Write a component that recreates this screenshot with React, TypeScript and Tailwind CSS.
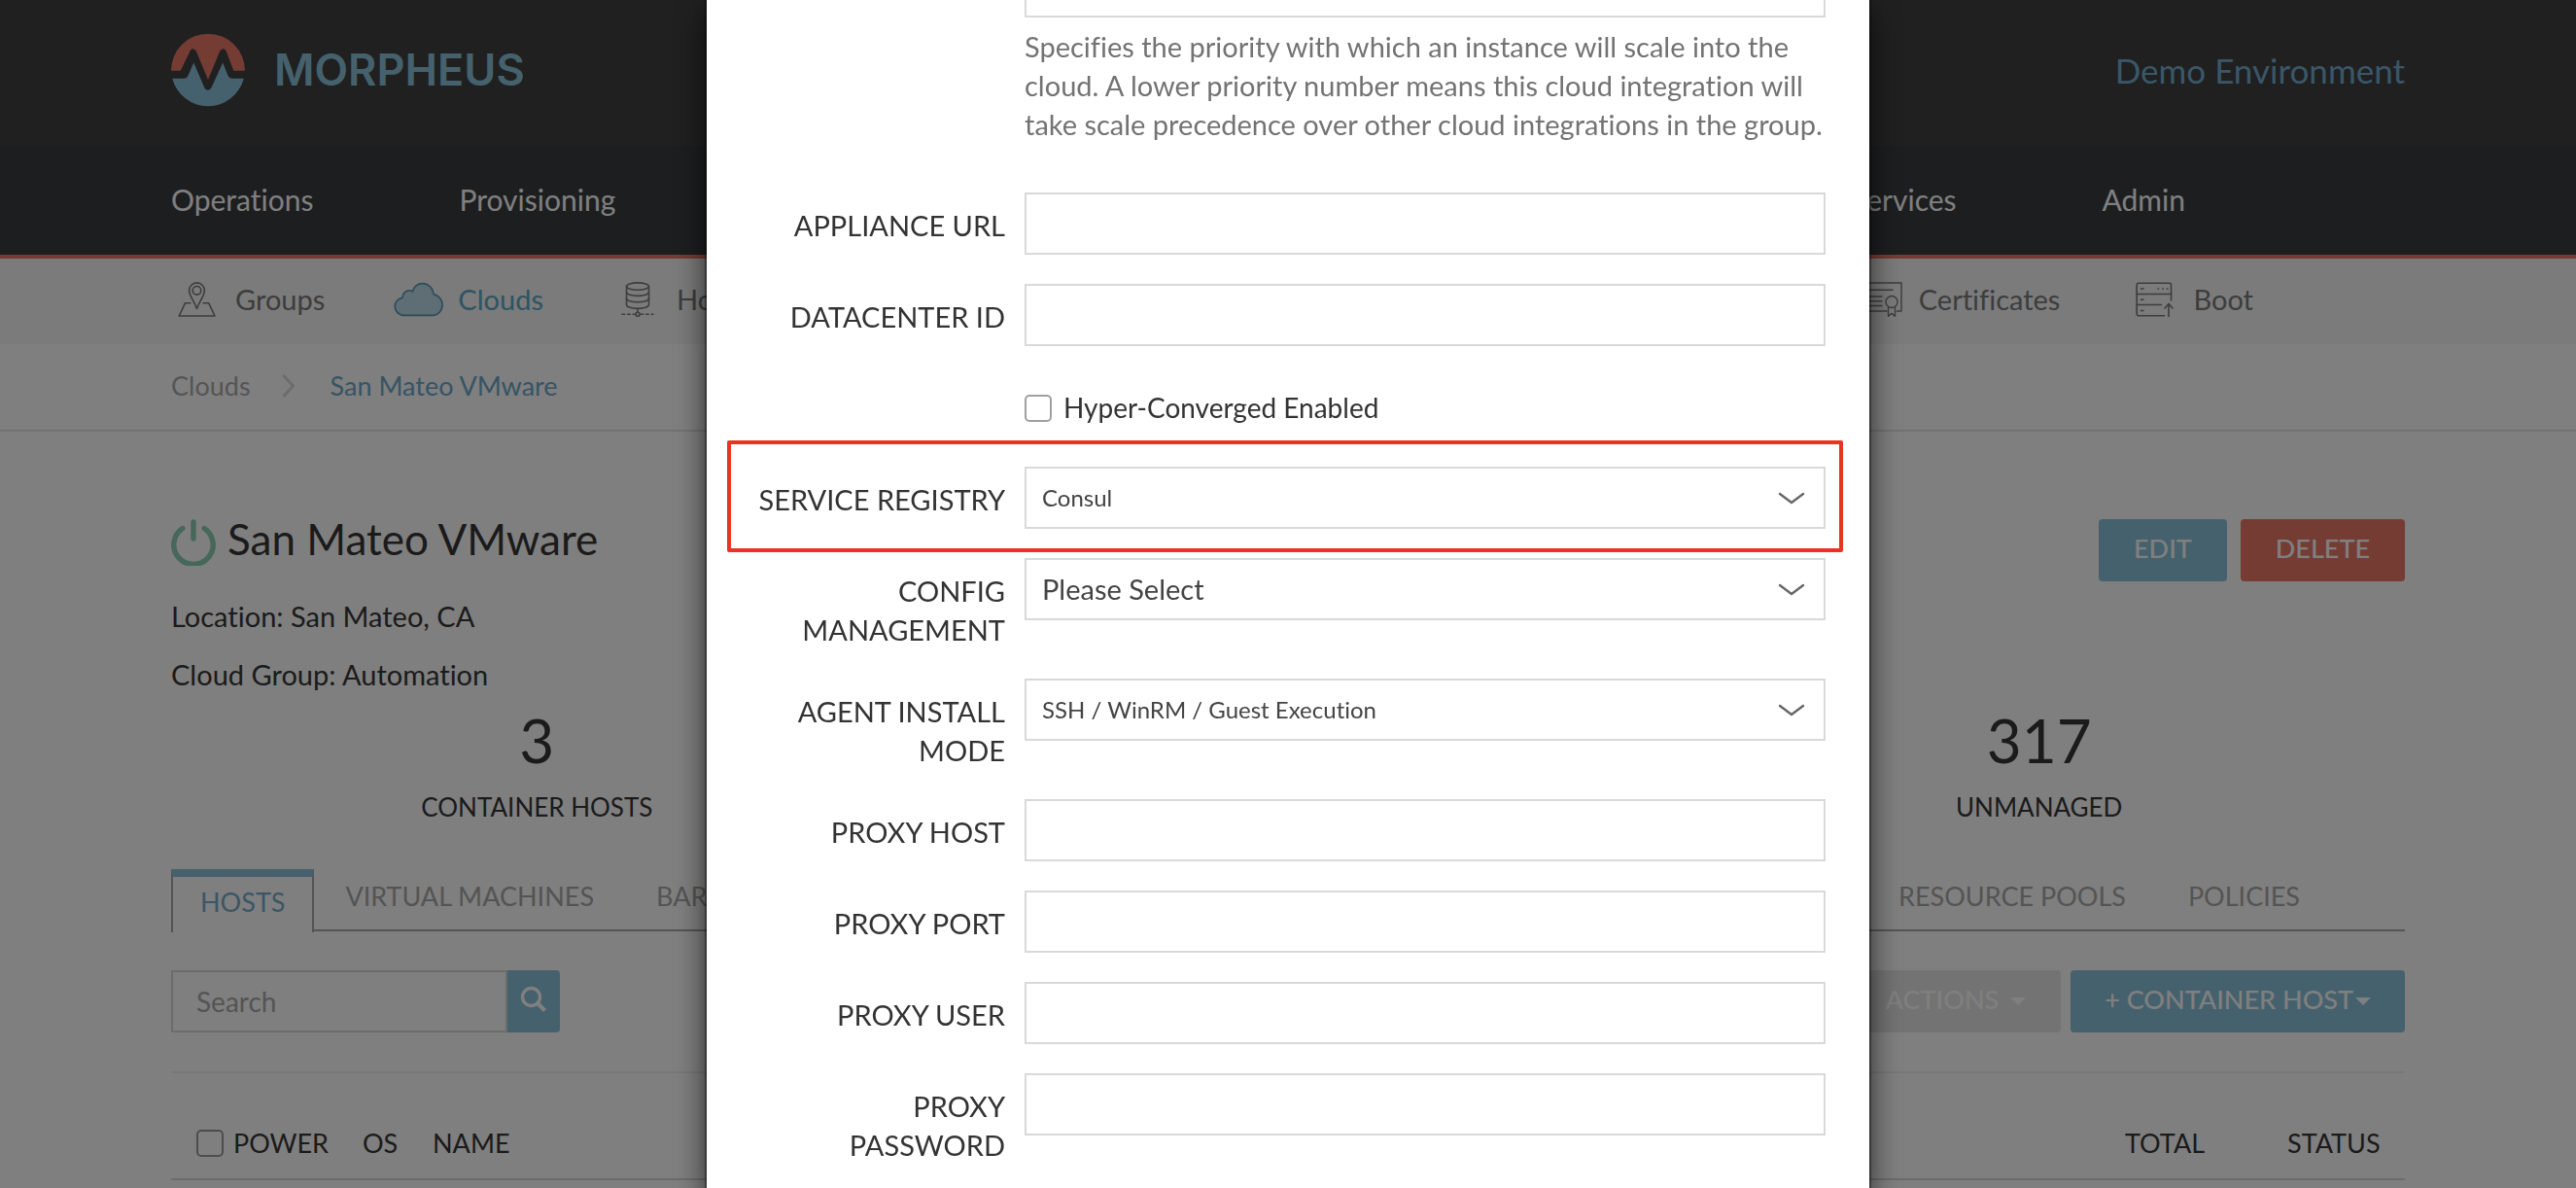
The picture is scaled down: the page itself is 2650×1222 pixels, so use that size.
import type { ReactNode } from "react";

function Container({ className = "", children }: { className?: string; children: ReactNode }) {
  return <div className={`mx-auto w-full max-w-[2298px] ${className}`}>{children}</div>;
}

function LogoMark() {
  return (
    <svg className="size-[76px]" viewBox="0 0 76 76" aria-hidden="true">
      <path
        fill="#ea7868"
        d="M0 38.7A38 38 0 0 1 76 38.7H64.4L57.4 20.5Q56 16.3 53.7 16.3Q51.2 16.3 49.6 20L38 48L26.4 20Q24.8 16.3 22.3 16.3Q20 16.3 18.6 20.5L9.7 38.7Z"
      />
      <path
        fill="#8bc3db"
        d="M1.2 46.7H13Q16.2 46.7 17.6 43.5L23.3 30.4L34 55.5Q35.5 58.8 38 58.8Q40.3 58.8 41.8 55.5L53.2 30.4L58.4 43.5Q59.8 46.7 63 46.7H74.8A38 38 0 0 1 1.2 46.7Z"
      />
    </svg>
  );
}

const lineIcon = {
  fill: "none",
  stroke: "currentColor",
  strokeWidth: 1.6,
  strokeLinecap: "round" as const,
  strokeLinejoin: "round" as const,
  "aria-hidden": true,
};

function GroupsIcon() {
  return (
    <svg className="h-9 w-[39px]" viewBox="0 0 39 36" {...lineIcon}>
      <path d="M19.5 27.5C17 20 11.6 14.5 11.6 8.8a7.9 7.9 0 0 1 15.8 0C27.4 14.5 22 20 19.5 27.5Z" />
      <circle cx="19.5" cy="8.8" r="4.3" />
      <path d="M12.8 21.8H7.4L1.2 35H38L31.8 21.8H26.2" />
    </svg>
  );
}

function CloudIcon() {
  return (
    <svg className="h-9 w-[52px] text-[#5796b4]" viewBox="0 0 52 36" {...lineIcon}>
      <path
        fill="#bedaea"
        d="M11 34.4C5.3 34.4 1.2 30 1.2 24.9C1.2 20.6 4.5 16.8 9 16.4C9 11.6 12.6 8.8 16.2 8.8Q18.2 8.8 19.6 9.9C20.4 5 24.5 1.6 29.6 1.6C35.5 1.6 40.6 6.3 41 12.6C46.4 13.8 50 18.2 50 23.6C50 29.6 45.6 34.4 40 34.4Z"
      />
    </svg>
  );
}

function HostsIcon() {
  return (
    <svg className="h-9 w-[34px]" viewBox="0 0 34 36" {...lineIcon}>
      <ellipse cx="17" cy="4.6" rx="11.5" ry="3.7" />
      <path d="M5.5 4.6V23.6C5.5 25.8 10.6 27.4 17 27.4S28.5 25.8 28.5 23.6V4.6" />
      <path d="M5.5 10.6C5.5 12.8 10.6 14.4 17 14.4S28.5 12.8 28.5 10.6" />
      <path d="M5.5 17C5.5 19.2 10.6 20.8 17 20.8S28.5 19.2 28.5 17" />
      <path d="M17 27.4V31" />
      <circle cx="17" cy="33.2" r="2" />
      <path d="M1 33.2H14M20 33.2H33" strokeDasharray="2.6 3" />
    </svg>
  );
}

function CertificateIcon() {
  return (
    <svg className="h-9 w-[46px]" viewBox="0 0 46 36" {...lineIcon} strokeWidth={1.4}>
      <path d="M30 30H1V1H45V30H40.5" />
      <path d="M10 8.3H36M8 15H25M8 19.7H25M8 24.5H25" />
      <circle cx="35" cy="20.5" r="6" />
      <path d="M31.5 26.5V35.2L35 32.4L38.5 35.2V26.5" />
    </svg>
  );
}

function BootIcon() {
  return (
    <svg className="h-9 w-[39px]" viewBox="0 0 39 36" {...lineIcon}>
      <path d="M36.5 19V3.2Q36.5 1.2 34.5 1.2H3.2Q1.2 1.2 1.2 3.2V32.7Q1.2 34.7 3.2 34.7H29.5" />
      <path d="M1.2 12.5H36.5M1.2 23.5H26.5" />
      <path d="M5.5 7H8M5.5 18.2H8M5.5 29.5H8M23 7H23.5M27.7 7H28.2M32.3 7H32.8" />
      <path d="M34 35.5V22.5M30 27L34 22.5L38 27" />
    </svg>
  );
}

function PowerIcon() {
  return (
    <svg className="h-12 w-[46px]" viewBox="0 0 46 48" fill="none" stroke="#8ccfb5" strokeWidth="5.4" strokeLinecap="round" aria-hidden="true">
      <path d="M23 3V20" />
      <path d="M11.8 9.5A20.2 20.2 0 1 0 34.2 9.5" />
    </svg>
  );
}

function SearchIcon() {
  return (
    <svg className="size-7" viewBox="0 0 28 28" fill="none" stroke="#fff" aria-hidden="true">
      <circle cx="11.5" cy="11.5" r="9" strokeWidth="3.4" />
      <path d="M18 18L25.5 25.5" strokeWidth="4.2" />
    </svg>
  );
}

function Caret() {
  return (
    <svg className="mt-1 h-2 w-4" viewBox="0 0 16 8" fill="currentColor" aria-hidden="true">
      <path d="M0 0H16L8 8Z" />
    </svg>
  );
}

function SubnavLink({ icon, label, active = false }: { icon: ReactNode; label: string; active?: boolean }) {
  return (
    <a
      href="#"
      className={`flex items-center gap-3.5 text-[29px] leading-10 ${active ? "text-[#5ea8c6]" : "text-[#7a7a7a]"}`}
    >
      <span className="flex w-[52px] justify-center">{icon}</span>
      {label}
    </a>
  );
}

function Stat({ value, label, className }: { value: string; label: string; className: string }) {
  return (
    <div className={`text-center text-[#363636] ${className}`}>
      <div className="text-[62px] leading-[62px]">{value}</div>
      <div className="mt-[22px] text-[26px] leading-8">{label}</div>
    </div>
  );
}

function TopBars() {
  return (
    <>
      <header className="bg-[#404040]">
        <Container className="flex h-[150px] items-center justify-between pb-1.5">
          <a href="#" className="flex items-center gap-[30px]">
            <LogoMark />
            <span className="font-[Inter,sans-serif] text-[45px] leading-[60px] font-semibold text-[#8bc3db]">
              MORPHEUS
            </span>
          </a>
          <a href="#" className="text-[35px] leading-[50px] text-[#74aed0]">Demo Environment</a>
        </Container>
      </header>
      <nav className="border-b-4 border-[#ea7868] bg-[#3a3c40]" aria-label="Main">
        <Container className="flex h-28 items-center justify-between pb-[3px] text-[30px] leading-10 text-white">
          <div className="flex gap-[150px]">
            <a href="#">Operations</a>
            <a href="#">Provisioning</a>
          </div>
          <div className="flex gap-[150px] pr-[226px]">
            <a href="#">Services</a>
            <a href="#">Admin</a>
          </div>
        </Container>
      </nav>
      <nav className="bg-[#f6f6f6]" aria-label="Infrastructure">
        <Container className="flex h-[88px] items-center justify-between pb-1">
          <div className="flex gap-[71px]">
            <SubnavLink icon={<GroupsIcon />} label="Groups" />
            <SubnavLink icon={<CloudIcon />} label="Clouds" active />
            <SubnavLink icon={<HostsIcon />} label="Hosts" />
          </div>
          <div className="flex gap-[71px] pr-[156px]">
            <SubnavLink icon={<CertificateIcon />} label="Certificates" />
            <SubnavLink icon={<BootIcon />} label="Boot" />
          </div>
        </Container>
      </nav>
      <nav className="border-b-2 border-[#e4e4e4]" aria-label="Breadcrumb">
        <Container className="flex h-[88px] items-center pb-0.5 text-[27px] leading-10">
          <a href="#" className="text-[#aaaaaa]">Clouds</a>
          <svg className="mr-9 ml-8 h-6 w-3.5" viewBox="0 0 14 24" fill="none" stroke="#d9d9d9" strokeWidth="3" aria-hidden="true">
            <path d="M1.5 1L11.5 12L1.5 23" />
          </svg>
          <a href="#" className="text-[#6ca8ca]">San Mateo VMware</a>
        </Container>
      </nav>
    </>
  );
}

const tabClass = "px-8 pb-1.5 leading-[56px]";

function CloudPage() {
  return (
    <main>
      <Container className="pt-[90px]">
        <div className="flex items-start justify-between">
          <div className="text-[29px] leading-10 text-[#363636]">
            <h1 className="mb-8 flex items-start gap-3 text-[44px]">
              <PowerIcon />
              San Mateo VMware
            </h1>
            <p className="mb-5">Location: San Mateo, CA</p>
            <p>Cloud Group: Automation</p>
          </div>
          <div className="flex gap-3.5 text-[27px] font-medium text-white">
            <button type="button" className="h-16 rounded bg-[#8bc3db] px-9 pb-1">EDIT</button>
            <button type="button" className="h-16 rounded bg-[#ea7868] px-9 pb-1">DELETE</button>
          </div>
        </div>

        <div className="mt-4 -mx-2.5 grid grid-cols-3">
          <Stat value="3" label="CONTAINER HOSTS" className="col-start-1" />
          <Stat value="317" label="UNMANAGED" className="col-start-3" />
        </div>

        <div role="tablist" className="mt-12 flex h-16 items-stretch border-b-2 border-[#aaaaaa] text-[27px] text-[#a9a9a9]">
          <button type="button" role="tab" aria-selected="true" className="-mb-[3px] border-x-2 border-t-8 border-x-[#a9a9a9] border-t-[#8bc3db] bg-white px-7 pb-1 text-[#76accc]">
            HOSTS
          </button>
          <button type="button" role="tab" className={tabClass}>VIRTUAL MACHINES</button>
          <button type="button" role="tab" className={tabClass}>BARE METAL</button>
          <button type="button" role="tab" className={`ml-auto ${tabClass}`}>RESOURCE POOLS</button>
          <button type="button" role="tab" className={`mr-[76px] ${tabClass}`}>POLICIES</button>
        </div>

        <div className="my-10 flex items-center justify-between">
          <form className="flex h-16">
            <input
              type="search"
              aria-label="Search hosts"
              placeholder="Search"
              className="w-[346px] border-2 border-[#d9d9d9] px-6 text-[28px] placeholder:text-[#a9a9a9]"
            />
            <button type="button" aria-label="Search" className="flex w-[54px] items-center justify-center rounded-r bg-[#8bc3db] pb-1">
              <SearchIcon />
            </button>
          </form>
          <div className="flex gap-2.5 text-[27px] font-medium text-white">
            <button type="button" disabled className="flex h-16 items-center gap-3 rounded bg-[#e6e6e6] px-9 pb-1">
              ACTIONS
              <Caret />
            </button>
            <button type="button" className="flex h-16 items-center gap-0.5 rounded bg-[#8bc3db] px-[35px] pb-1">
              + CONTAINER HOST
              <Caret />
            </button>
          </div>
        </div>

        <table className="w-full table-fixed border-y-2 border-t-[#efefef] border-b-[#d9d9d9] text-left text-[27px] text-[#363636]">
          <thead>
            <tr className="h-[110px]">
              <th className="w-16 pt-9 pl-[26px]">
                <input
                  type="checkbox"
                  aria-label="Select all hosts"
                  className="block size-7 appearance-none rounded-[5px] border-2 border-[#9a9a9a]"
                />
              </th>
              <th className="w-[133px] pt-9 font-normal">POWER</th>
              <th className="w-[72px] pt-9 font-normal">OS</th>
              <th className="pt-9 font-normal">NAME</th>
              <th className="w-[167px] pt-9 font-normal">TOTAL</th>
              <th className="w-[121px] pt-9 font-normal">STATUS</th>
            </tr>
          </thead>
        </table>
      </Container>
    </main>
  );
}

function Row({ id, label, highlighted = false, children }: { id: string; label?: string; highlighted?: boolean; children: ReactNode }) {
  return (
    <div className="relative mb-[30px] grid grid-cols-[262px_1fr] gap-5">
      {label ? (
        <label htmlFor={id} className="pt-3.5 text-right whitespace-pre-line">{label}</label>
      ) : (
        <span />
      )}
      <div>{children}</div>
      {highlighted && (
        <div className="pointer-events-none absolute -top-[27px] -right-[18px] -bottom-6 -left-6 rounded-xs border-4 border-[#e93323]" />
      )}
    </div>
  );
}

function TextRow({ id, label, type = "text" }: { id: string; label: string; type?: string }) {
  return (
    <Row id={id} label={label}>
      <input id={id} type={type} className="block h-16 w-full border-2 border-[#d9d9d9] bg-white px-4" />
    </Row>
  );
}

function SelectRow({ id, label, value, small = false, highlighted = false }: { id: string; label: string; value: string; small?: boolean; highlighted?: boolean }) {
  return (
    <Row id={id} label={label} highlighted={highlighted}>
      <div className="relative">
        <select
          id={id}
          className={`block h-16 w-full appearance-none border-2 border-[#d9d9d9] bg-white px-4 text-[#444444] ${small ? "text-[24px]" : "text-[29px]"}`}
        >
          <option>{value}</option>
        </select>
        <svg className="pointer-events-none absolute top-[26px] right-[21px] h-3.5 w-7" viewBox="0 0 28 14" fill="none" stroke="#666" strokeWidth="2.4" strokeLinecap="round" aria-hidden="true">
          <path d="M2 2L14 11L26 2" />
        </svg>
      </div>
    </Row>
  );
}

function EditCloudDialog() {
  return (
    <div className="fixed inset-0 overflow-hidden bg-black/50">
      <div
        role="dialog"
        aria-label="Edit cloud"
        className="mx-auto flow-root min-h-full w-full max-w-[1196px] bg-white px-[45px] text-[29px] leading-10 text-[#333333] shadow-[0_0_0_2px_rgba(0,0,0,0.35),0_10px_30px_rgba(0,0,0,0.7)]"
      >
        <form className="-mt-[46px]">
          <Row id="scale-priority">
            <input
              id="scale-priority"
              type="text"
              aria-label="Scale priority"
              aria-describedby="scale-priority-help"
              className="block h-16 w-full border-2 border-[#d9d9d9] px-4"
            />
            <p id="scale-priority-help" className="-mr-3 pt-2.5 pb-5 text-[#737373]">
              Specifies the priority with which an instance will scale into the cloud. A lower priority number
              means this cloud integration will take scale precedence over other cloud integrations in the group.
            </p>
          </Row>
          <TextRow id="appliance-url" label="APPLIANCE URL" />
          <TextRow id="datacenter-id" label="DATACENTER ID" />
          <Row id="hyper-converged">
            <label className="flex h-16 items-center gap-3 pt-1 text-[28px]">
              <input
                id="hyper-converged"
                type="checkbox"
                className="size-7 appearance-none rounded-[5px] border-2 border-[#a0a0a0] bg-white"
              />
              <span className="pb-0.5">Hyper-Converged Enabled</span>
            </label>
          </Row>
          <SelectRow id="service-registry" label="SERVICE REGISTRY" value="Consul" small highlighted />
          <SelectRow id="config-management" label={"CONFIG\nMANAGEMENT"} value="Please Select" />
          <SelectRow id="agent-install-mode" label={"AGENT INSTALL\nMODE"} value="SSH / WinRM / Guest Execution" small />
          <TextRow id="proxy-host" label="PROXY HOST" />
          <TextRow id="proxy-port" label="PROXY PORT" />
          <TextRow id="proxy-user" label="PROXY USER" />
          <TextRow id="proxy-password" label={"PROXY\nPASSWORD"} type="password" />
        </form>
      </div>
    </div>
  );
}

export default function App() {
  return (
    <div className="min-h-screen bg-white font-[Lato,'Open_Sans',sans-serif] [font-variant-ligatures:none]">
      <TopBars />
      <CloudPage />
      <EditCloudDialog />
    </div>
  );
}
